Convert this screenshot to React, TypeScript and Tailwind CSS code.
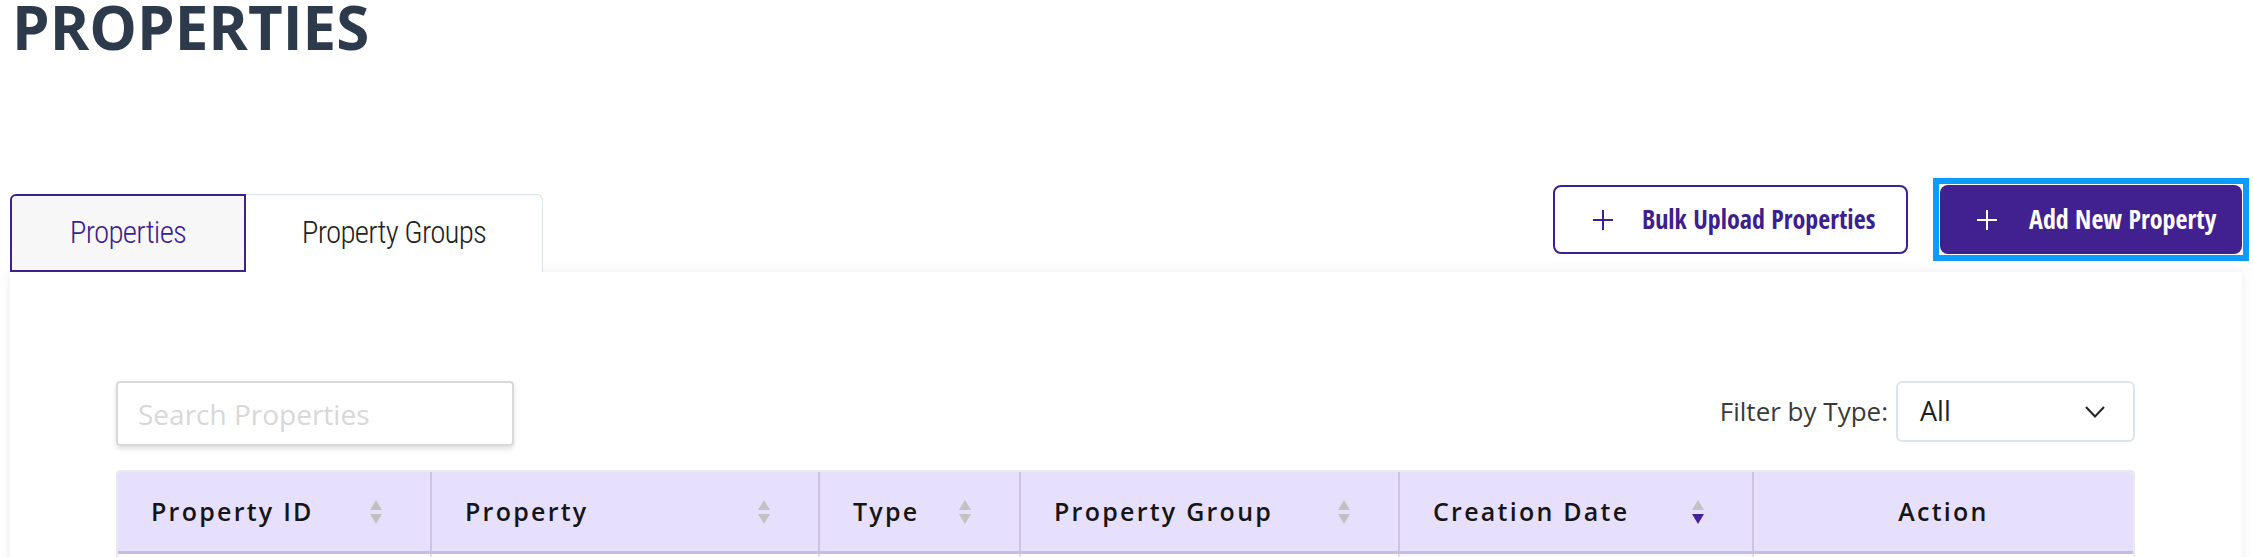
import React from 'react';

const columns = [
  { label: 'Property ID', sortable: true },
  { label: 'Property', sortable: true },
  { label: 'Type', sortable: true },
  { label: 'Property Group', sortable: true },
  { label: 'Creation Date', sortable: true, active: true },
  { label: 'Action', sortable: false },
];

const SortIcon = ({ active }: { active?: boolean }) => (
  <svg width="14" height="26" viewBox="0 0 14 26" className="shrink-0">
    <path d="M7 1 L13 11 H1 Z" fill="#c2c2c2" />
    <path d="M7 25 L13 15 H1 Z" fill={active ? '#44229a' : '#c2c2c2'} />
  </svg>
);

const PlusIcon = ({ color }: { color: string }) => (
  <svg width="22" height="22" viewBox="0 0 22 22" className="shrink-0">
    <path d="M11 1 V21 M1 11 H21" stroke={color} strokeWidth="2" />
  </svg>
);

export default function App() {
  return (
    <div className="min-h-screen bg-white font-['Open_Sans','Noto_Sans',sans-serif]">
      <h1 className="pl-[12px] text-[60px] font-bold leading-[54px] text-[#2c3a4b]">PROPERTIES</h1>

      <div className="mt-[124px] flex items-end justify-between pl-[10px] pr-[4px]">
        <div className="flex h-[78px] font-['Roboto_Condensed','Roboto',sans-serif] text-[31px] font-light tracking-[-0.025em]">
          <button className="w-[236px] rounded-tl-md border-2 border-[#3d1f8f] bg-[#f7f7f8] text-[#3d1f8f]">
            Properties
          </button>
          <button className="w-[297px] rounded-tr-md border border-b-0 border-l-0 border-[#d8e2ea] bg-white text-[#222]">
            Property Groups
          </button>
        </div>

        <div className="mb-[11px] flex items-center gap-[25px] font-['Open_Sans_Condensed','Roboto_Condensed',sans-serif] text-[26px] font-bold">
          <button className="flex h-[69px] w-[355px] items-center gap-[28px] rounded-lg border-2 border-[#3d1f8f] bg-white pl-[37px] text-[#3d1f8f]">
            <PlusIcon color="#3d1f8f" />
            Bulk Upload Properties
          </button>
          <div className="border-[6px] border-[#0c9cff] p-px">
            <button className="flex h-[69px] w-[302px] items-center gap-[31px] rounded-lg bg-[#41208f] pl-[36px] text-white">
              <PlusIcon color="#ffffff" />
              Add New Property
            </button>
          </div>
        </div>
      </div>

      <div className="mr-[11px] ml-[10px] min-h-[400px] bg-white pt-[109px] pr-[107px] pl-[106px] shadow-[0_0_12px_rgba(0,0,0,0.08)]">
        <div className="flex items-start justify-between">
          <input
            className="h-[65px] w-[398px] rounded border-2 border-[#d9d9d9] px-[20px] text-[28px] text-[#333] shadow-[0_3px_5px_rgba(0,0,0,0.12)] outline-none placeholder:text-[#d8d8d8]"
            placeholder="Search Properties"
          />
          <div className="flex items-center gap-[8px]">
            <span className="text-[26px] text-[#3a3a3a]">Filter by Type:</span>
            <div className="flex h-[61px] w-[239px] items-center justify-between rounded-md border-2 border-[#dbe5ed] pr-[28px] pl-[22px] text-[27px] text-[#222]">
              <span>All</span>
              <svg width="20" height="12" viewBox="0 0 20 12">
                <path d="M1 1 L10 10.5 L19 1" stroke="#222" strokeWidth="2" fill="none" />
              </svg>
            </div>
          </div>
        </div>

        <div className="mt-[24px] overflow-hidden rounded-t border-2 border-[#ebe9f0]">
          <div className="grid grid-cols-[312px_388px_201px_379px_354px_381px] border-b-[3px] border-[#c7bce4] bg-[#e7e0fd]">
            {columns.map((c, i) => (
              <div
                key={c.label}
                className={
                  'flex h-[79px] items-center text-[25px] font-semibold tracking-[0.09em] text-[#151515] ' +
                  (i > 0 ? 'border-l-2 border-[#cdc3e5] ' : '') +
                  (c.sortable ? 'justify-between pr-[47px] pl-[33px]' : 'justify-center')
                }
              >
                <span>{c.label}</span>
                {c.sortable && <SortIcon active={c.active} />}
              </div>
            ))}
          </div>
          <div className="grid h-[80px] grid-cols-[312px_388px_201px_379px_354px_381px]">
            {columns.map((c, i) => (
              <div
                key={c.label}
                className={(i > 0 ? 'border-l-2 border-[#e3e0ea] ' : '') + (c.active ? 'bg-[#fafafa]' : 'bg-white')}
              />
            ))}
          </div>
        </div>
      </div>
    </div>
  );
}
